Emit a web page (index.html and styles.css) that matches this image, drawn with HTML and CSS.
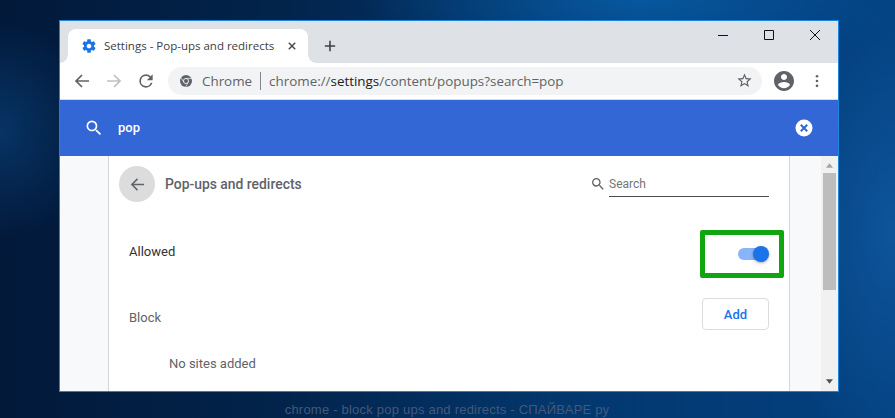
FILE: index.html
```html
<!DOCTYPE html>
<html lang="en">
<head>
<meta charset="utf-8">
<title>Settings - Pop-ups and redirects</title>
<link rel="stylesheet" href="styles.css">
</head>
<body>
<div class="desktop">
  <div class="window">
    <div class="tabstrip">
      <div class="tab">
        <svg class="tab-icon" viewBox="0 0 24 24"><path d="M19.43 12.98c.04-.32.07-.64.07-.98s-.03-.66-.07-.98l2.11-1.65c.19-.15.24-.42.12-.64l-2-3.46c-.12-.22-.39-.3-.61-.22l-2.49 1c-.52-.4-1.08-.73-1.69-.98l-.38-2.65C14.46 2.18 14.25 2 14 2h-4c-.25 0-.46.18-.49.42l-.38 2.65c-.61.25-1.17.59-1.69.98l-2.49-1c-.23-.09-.49 0-.61.22l-2 3.46c-.13.22-.07.49.12.64l2.11 1.65c-.04.32-.07.65-.07.98s.03.66.07.98l-2.11 1.65c-.19.15-.24.42-.12.64l2 3.46c.12.22.39.3.61.22l2.49-1c.52.4 1.08.73 1.69.98l.38 2.65c.03.24.24.42.49.42h4c.25 0 .46-.18.49-.42l.38-2.65c.61-.25 1.17-.59 1.69-.98l2.49 1c.23.09.49 0 .61-.22l2-3.46c.12-.22.07-.49-.12-.64l-2.11-1.65zM12 15.500c-1.930 0-3.500-1.570-3.500-3.500s1.570-3.500 3.500-3.500 3.500 1.570 3.500 3.500-1.570 3.500-3.500 3.500z"/></svg>
        <span class="tab-title">Settings - Pop-ups and redirects</span>
        <svg class="tab-close" viewBox="0 0 10 10"><path d="M1 1l8 8M9 1l-8 8"/></svg>
      </div>
      <svg class="new-tab" viewBox="0 0 14 14"><path d="M7 1v12M1 7h12"/></svg>
      <div class="caption">
        <svg class="cap-btn" viewBox="0 0 10 10"><path d="M0 5.500h10"/></svg>
        <svg class="cap-btn" viewBox="0 0 10 10"><path d="M.5.5h9v9h-9z"/></svg>
        <svg class="cap-btn" viewBox="0 0 10 10"><path d="M0 0l10 10M10 0L0 10"/></svg>
      </div>
    </div>
    <div class="toolbar">
      <svg class="nav-icon" viewBox="0 0 16 16"><path d="M15 8H2M8 2L2 8l6 6"/></svg>
      <svg class="nav-icon nav-off" viewBox="0 0 16 16"><path d="M1 8h13M8 2l6 6-6 6"/></svg>
      <svg class="nav-icon nav-reload" viewBox="0 0 24 24"><path d="M17.650 6.350A7.960 7.960 0 0 0 12 4a8 8 0 1 0 7.730 10h-2.080A6 6 0 1 1 12 6c1.660 0 3.140.69 4.220 1.780L13 11h7V4l-2.350 2.350z"/></svg>
      <div class="omnibox">
        <svg class="chrome-logo" viewBox="0 0 16 16"><circle cx="8" cy="8" r="8"/><circle class="chrome-hole" cx="8" cy="8" r="3.400"/><path class="chrome-cut" d="M8 4.600h8M5 9.700L1 2.800M11 9.700l-4 6.800"/></svg>
        <span class="origin">Chrome</span>
        <span class="omni-sep"></span>
        <span class="url">chrome://<b>settings</b>/content/popups?search=pop</span>
        <svg class="star" viewBox="0 0 24 24"><path d="M22 9.240l-7.190-.62L12 2 9.190 8.630 2 9.240l5.460 4.730L5.820 21 12 17.270 18.180 21l-1.630-7.030L22 9.240zM12 15.400l-3.760 2.270 1-4.280-3.320-2.880 4.380-.38L12 6.100l1.710 4.040 4.380.38-3.320 2.880 1 4.280L12 15.400z"/></svg>
      </div>
      <svg class="avatar" viewBox="0 0 24 24"><path d="M12 2C6.480 2 2 6.480 2 12s4.480 10 10 10 10-4.480 10-10S17.520 2 12 2zm0 3c1.660 0 3 1.340 3 3s-1.340 3-3 3-3-1.340-3-3 1.340-3 3-3zm0 14.200c-2.500 0-4.710-1.280-6-3.220.03-1.990 4-3.080 6-3.080 1.990 0 5.970 1.090 6 3.080-1.290 1.940-3.500 3.220-6 3.220z"/></svg>
      <svg class="dots" viewBox="0 0 4 16"><circle cx="2" cy="2.500" r="1.500"/><circle cx="2" cy="8" r="1.500"/><circle cx="2" cy="13.500" r="1.500"/></svg>
    </div>
    <div class="searchbar">
      <svg class="search-icon" viewBox="0 0 24 24"><path d="M15.500 14h-.79l-.28-.27A6.470 6.470 0 0 0 16 9.500 6.500 6.500 0 1 0 9.500 16c1.610 0 3.090-.59 4.230-1.570l.27.28v.79l5 4.990L20.490 19l-4.990-5zm-6 0C7.010 14 5 11.990 5 9.500S7.010 5 9.500 5 14 7.010 14 9.500 11.990 14 9.500 14z"/></svg>
      <span class="search-query">pop</span>
      <svg class="search-clear" viewBox="0 0 18 18"><circle cx="9" cy="9" r="8.500"/><path d="M5.800 5.800l6.400 6.400M12.200 5.800l-6.400 6.400"/></svg>
    </div>
    <div class="content">
      <div class="card">
        <div class="card-head">
          <div class="back-btn"><svg viewBox="0 0 16 16"><path d="M15 8H2M8 2L2 8l6 6"/></svg></div>
          <h1 class="card-title">Pop-ups and redirects</h1>
          <svg class="field-icon" viewBox="0 0 24 24"><path d="M15.500 14h-.79l-.28-.27A6.470 6.470 0 0 0 16 9.500 6.500 6.500 0 1 0 9.500 16c1.610 0 3.090-.59 4.230-1.570l.27.28v.79l5 4.990L20.490 19l-4.990-5zm-6 0C7.010 14 5 11.990 5 9.500S7.010 5 9.500 5 14 7.010 14 9.500 11.990 14 9.500 14z"/></svg>
          <div class="field">Search</div>
        </div>
        <div class="row-allowed">
          <span class="label-allowed">Allowed</span>
          <span class="toggle"><span class="knob"></span></span>
          <span class="highlight"></span>
        </div>
        <div class="row-block">
          <span class="label-block">Block</span>
          <span class="add-btn">Add</span>
        </div>
        <div class="empty">No sites added</div>
      </div>
      <div class="scrollbar">
        <svg class="arrow" viewBox="0 0 8 5"><path class="arrow-up" d="M4 0l4 5H0z"/></svg>
        <div class="track"><div class="thumb"></div></div>
        <svg class="arrow" viewBox="0 0 8 5"><path d="M0 0h8L4 5z"/></svg>
      </div>
    </div>
  </div>
  <div class="footnote">chrome - block pop ups and redirects - СПАЙВАРЕ ру</div>
</div>
</body>
</html>
```
FILE: styles.css
```css
* { box-sizing: border-box; }
html, body { margin: 0; height: 100%; }
body { overflow: hidden; background: #03274f; }
svg { display: block; flex: none; }

.desktop {
  width: 895px;
  height: 418px;
  padding: 20px 56px 0 59px;
  overflow: hidden;
  background:
    radial-gradient(ellipse 280px 70px at 640px 0, rgba(8, 95, 170, .8), rgba(8, 95, 170, 0)),
    radial-gradient(ellipse 120px 240px at 895px 230px, rgba(16, 90, 160, .8), rgba(16, 90, 160, 0)),
    radial-gradient(ellipse 90px 110px at 0 130px, rgba(10, 70, 130, .6), rgba(10, 70, 130, 0)),
    linear-gradient(90deg, #02193a 0%, #02234a 30%, #03386f 65%, #034080 100%);
}

.window {
  width: 780px;
  height: 372px;
  border: 1px solid #1a86e0;
  background: #fff;
  display: flex;
  flex-direction: column;
}

/* tab strip */
.tabstrip {
  height: 42px;
  flex: none;
  background: #dee1e6;
  display: flex;
  padding-left: 8px;
}
.tab {
  position: relative;
  width: 240px;
  height: 34px;
  margin-top: 8px;
  background: #fff;
  border-radius: 8px 8px 0 0;
  display: flex;
  align-items: center;
  padding-left: 13px;
}
.tab::before, .tab::after {
  content: "";
  position: absolute;
  bottom: 0;
  width: 8px;
  height: 8px;
}
.tab::before { left: -8px; background: radial-gradient(circle at 0 0, #dee1e6 7.500px, #fff 8px); }
.tab::after { right: -8px; background: radial-gradient(circle at 100% 0, #dee1e6 7.500px, #fff 8px); }
.tab-icon { width: 16px; height: 16px; fill: #1a73e8; }
.tab-title {
  margin-left: 7px;
  font: 11.500px/16px "Open Sans", sans-serif;
  color: #3c4043;
  white-space: nowrap;
}
.tab-close { width: 8px; height: 8px; margin-left: 14px; fill: none; stroke: #45494d; stroke-width: 1.800; }
.new-tab { width: 12px; height: 12px; margin: 19px 0 0 16px; fill: none; stroke: #3c4043; stroke-width: 1.800; }
.caption {
  margin-left: auto;
  padding: 9px 18px 0 0;
  display: flex;
  gap: 36px;
}
.cap-btn { width: 10px; height: 10px; fill: none; stroke: #111; stroke-width: 1; }

/* toolbar */
.toolbar {
  height: 37px;
  flex: none;
  background: #fff;
  border-bottom: 1px solid #dadce0;
  display: flex;
  align-items: center;
  padding: 0 0 1px 14px;
}
.nav-icon { width: 16px; height: 16px; fill: none; stroke: #5f6368; stroke-width: 1.700; margin-right: 16px; }
.nav-off { stroke: #bdc1c6; }
.nav-reload { fill: #5f6368; stroke: none; width: 20px; height: 20px; margin: 0 12px 0 -2px; }
.omnibox {
  width: 594px;
  height: 28px;
  background: #f1f3f4;
  border-radius: 14px;
  display: flex;
  align-items: center;
  padding-left: 12px;
  font: 13.400px/20px "Open Sans", sans-serif;
  color: #5f6368;
  white-space: nowrap;
}
.chrome-logo { width: 12px; height: 12px; fill: #5f6368; }
.chrome-hole { fill: #5f6368; stroke: #f1f3f4; stroke-width: 1.200; }
.chrome-cut { fill: none; stroke: #f1f3f4; stroke-width: .9; }
.origin { margin-left: 10px; }
.omni-sep { width: 1px; height: 18px; background: #80868b; margin: 0 8px; }
.url b { font-weight: 400; color: #202124; }
.star { width: 17px; height: 17px; fill: #5f6368; margin-left: auto; margin-right: 9px; }
.avatar { width: 24px; height: 24px; fill: #5f6368; margin-left: 10px; }
.dots { width: 4px; height: 14px; fill: #5f6368; margin-left: 19px; }

/* blue search bar */
.searchbar {
  height: 56px;
  flex: none;
  background: #3367d6;
  display: flex;
  align-items: center;
  padding: 0 25px 0 24px;
  color: #fff;
}
.search-icon { width: 20px; height: 20px; fill: #fff; }
.search-query { margin-left: 14px; font: 500 13px/20px Roboto, sans-serif; }
.search-clear { width: 18px; height: 18px; margin-left: auto; }
.search-clear circle { fill: #fff; }
.search-clear path { fill: none; stroke: #3367d6; stroke-width: 2; }

/* content */
.content {
  flex: 1;
  min-height: 0;
  background: #f8f9fa;
  display: flex;
  font-family: Roboto, sans-serif;
  color: #5f6368;
  overflow: hidden;
}
.card {
  width: 682px;
  margin-left: 48px;
  background: #fff;
  border-left: 1px solid #d4d6d9;
  border-right: 1px solid #d4d6d9;
  padding: 0 20px;
}
.card-head { display: flex; align-items: center; height: 56px; margin-left: -10px; }
.back-btn {
  width: 36px;
  height: 36px;
  border-radius: 50%;
  background: #dcdcdc;
  display: flex;
  align-items: center;
  justify-content: center;
}
.back-btn svg { width: 15px; height: 15px; fill: none; stroke: #5f6368; stroke-width: 1.600; }
.card-title { margin: 0 0 0 10px; font: 500 13.900px/20px Roboto, sans-serif; color: #5f6368; }
.field-icon { width: 16px; height: 16px; fill: #5f6368; margin-left: auto; margin-right: 0; }
.field {
  width: 160px;
  height: 20px;
  margin: 6px 0 0 3px;
  border-bottom: 1px solid #4a4d50;
  font-size: 12px;
  line-height: 15px;
  color: #757575;
}
.row-allowed {
  position: relative;
  display: flex;
  align-items: center;
  justify-content: space-between;
  height: 48px;
  margin-top: 18px;
}
.label-allowed { font-size: 13px; color: #303236; padding-bottom: 6px; }
.toggle {
  position: relative;
  width: 30px;
  height: 12px;
  margin-right: 1px;
  border-radius: 6px;
  background: #8ab4f8;
}
.knob {
  position: absolute;
  right: -1px;
  top: -2px;
  width: 16px;
  height: 16px;
  border-radius: 50%;
  background: #1a73e8;
  box-shadow: 0 1px 3px rgba(0, 0, 0, .35);
}
.highlight {
  position: absolute;
  right: -15px;
  top: 0;
  width: 84px;
  height: 48px;
  border: 5px solid #0fa60f;
  border-radius: 2px;
}
.row-block {
  display: flex;
  align-items: center;
  justify-content: space-between;
  margin-top: 20px;
  height: 32px;
}
.label-block { font-size: 13px; padding-top: 6px; }
.add-btn {
  width: 67px;
  height: 32px;
  border: 1px solid #dadce0;
  border-radius: 4px;
  display: flex;
  align-items: center;
  justify-content: center;
  color: #1a73e8;
  font-size: 13px;
  font-weight: 500;
}
.empty { margin: 25px 0 0 40px; font-size: 13px; line-height: 18px; }

/* scrollbar */
.scrollbar {
  width: 17px;
  margin-left: auto;
  background: #f1f1f1;
  display: flex;
  flex-direction: column;
  align-items: center;
  padding: 7px 0;
}
.arrow { width: 7px; height: 5px; fill: #505050; }
.arrow-up { fill: #a3a3a3; }
.track { flex: 1; width: 100%; padding: 5px 2px; }
.thumb { height: 117px; background: #bdbdbd; }

.footnote {
  margin-top: 10px;
  text-align: center;
  width: 776px;
  font: 13px/16px "Liberation Sans", sans-serif;
  letter-spacing: .22px;
  color: #42597a;
}
```
